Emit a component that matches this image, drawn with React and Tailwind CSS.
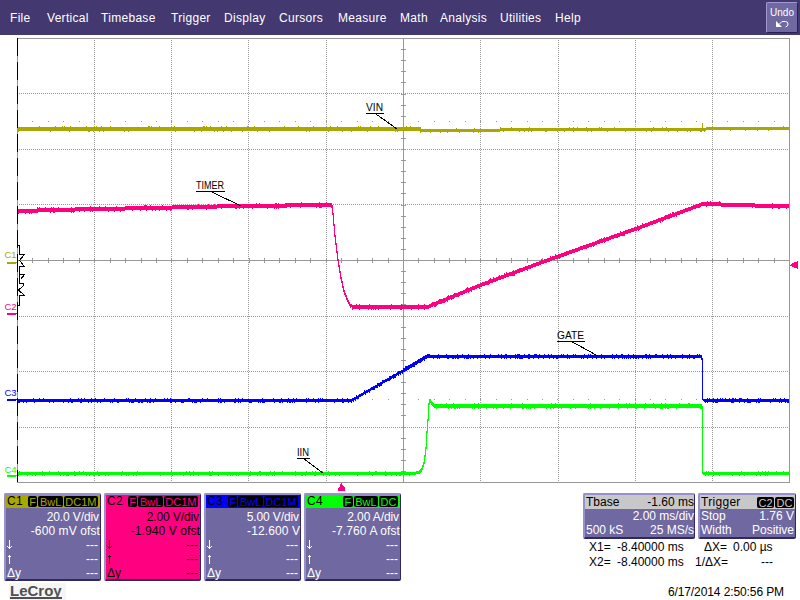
import clsx from "clsx";

const menuItems = [
  { label: "File", width: "w-[37px]" },
  { label: "Vertical", width: "w-[54px]" },
  { label: "Timebase", width: "w-[70px]" },
  { label: "Trigger", width: "w-[53px]" },
  { label: "Display", width: "w-[55px]" },
  { label: "Cursors", width: "w-[59px]" },
  { label: "Measure", width: "w-[62px]" },
  { label: "Math", width: "w-[40px]" },
  { label: "Analysis", width: "w-[60px]" },
  { label: "Utilities", width: "w-[55px]" },
  { label: "Help", width: "w-[40px]" },
];

const channels = [
  {
    name: "C1",
    flags: ["F", "BwL", "DC1M"],
    scale: "20.0 V/div",
    offset: "-600 mV ofst",
    header: "bg-[#aaa800]",
    flagText: "text-[#aaa800]",
    body: "bg-[#7068a0] text-white",
  },
  {
    name: "C2",
    flags: ["F", "BwL", "DC1M"],
    scale: "2.00 V/div",
    offset: "-1.940 V ofst",
    header: "bg-[#ff0080]",
    flagText: "text-[#ff0080]",
    body: "bg-[#ff0080] text-black",
  },
  {
    name: "C3",
    flags: ["F", "BwL", "DC1M"],
    scale: "5.00 V/div",
    offset: "-12.600 V",
    header: "bg-[#0000ff]",
    flagText: "text-[#0000ff]",
    body: "bg-[#7068a0] text-white",
  },
  {
    name: "C4",
    flags: ["F", "BwL", "DC"],
    scale: "2.00 A/div",
    offset: "-7.760 A ofst",
    header: "bg-[#00ff00]",
    flagText: "text-[#00ff00]",
    body: "bg-[#7068a0] text-white",
  },
];

// [x, y, thickness] break points of each waveform
const traces = [
  {
    id: "vin",
    color: "#aaa800",
    noise: 0.1,
    points: [[18, 129, 4], [420, 129, 4], [421, 130.5, 3], [480, 130.5, 3], [520, 129.5, 3], [700, 129.5, 3], [712, 128.5, 3], [789, 128.5, 3]],
  },
  {
    id: "timer",
    color: "#ff0080",
    noise: 0.14,
    points: [
      [18, 211, 4], [75, 209.5, 4], [150, 208, 4], [240, 206, 4], [331, 205, 4], [332, 206, 2], [333, 214, 2], [335, 236, 2],
      [338, 260, 2], [341, 278, 2], [344, 291, 2], [347, 299, 2], [350, 305, 3], [352, 306.5, 4], [429, 306.5, 4],
      [480, 285.5, 4], [550, 259.5, 4], [640, 227.5, 4], [698, 206, 4], [703, 204, 4], [789, 206.5, 4],
    ],
  },
  {
    id: "gate",
    color: "#0000ff",
    noise: 0.25,
    points: [[18, 400.5, 3], [352, 400.5, 3], [403, 371, 4], [428, 356, 4], [430, 356.5, 3], [701, 356.5, 3], [702, 358, 1], [703, 399, 1], [704, 400.5, 3], [789, 400.5, 3]],
  },
  {
    id: "iin",
    color: "#00ff00",
    noise: 0.15,
    points: [
      [18, 473.5, 3], [415, 473.5, 3], [419, 472, 3], [422, 469, 2], [424, 463, 2], [426, 448, 2], [427, 432, 2], [428, 420, 2],
      [429, 404, 2], [430, 400, 2], [431, 402, 3], [434, 405.5, 4], [701, 405.5, 4], [702, 407, 2], [703, 473, 2], [704, 473.5, 3], [789, 473.5, 3],
    ],
  },
];

function sample(points, x) {
  for (let i = 1; i < points.length; i++) {
    const [x0, y0, t0] = points[i - 1];
    const [x1, y1] = points[i];
    if (x <= x1) {
      return { y: y0 + ((y1 - y0) * (x - x0)) / (x1 - x0), t: x === x1 ? points[i][2] : t0 };
    }
  }
  const last = points[points.length - 1];
  return { y: last[1], t: last[2] };
}

// One vertical run of pixels per column, with an odd pixel of noise on either side
function tracePath(points, noise, start) {
  let seed = start;
  const rand = () => {
    seed = (seed * 16807) % 2147483647;
    return seed / 2147483647;
  };
  let d = "";
  for (let x = 18; x < 789; x++) {
    const a = sample(points, x);
    const b = sample(points, x + 1);
    let top = Math.round(Math.min(a.y, b.y) - a.t / 2);
    let bottom = Math.round(Math.max(a.y, b.y) + a.t / 2);
    if (a.t > 2 && Math.abs(a.y - b.y) < 1) {
      bottom = top + a.t;
      if (rand() < noise) bottom += 1;
      if (rand() < noise * 0.7) top -= 1;
    }
    d += `M${x} ${top}h1V${bottom}h-1z`;
  }
  return d;
}

const columns = [94, 171, 248, 326, 403, 480, 558, 635, 712];
const rows = [93, 149, 204, 260, 316, 371, 427];
const xTicks = Array.from({ length: 49 }, (_, i) => Math.round(17 + (i + 1) * 15.44));
const yTicks = Array.from({ length: 39 }, (_, i) => Math.round(38 + (i + 1) * 11.1));

const markers = [
  { name: "C1", text: 258, line: 262, color: "#aaa800" },
  { name: "C2", text: 310, line: 313, color: "#ff0080" },
  { name: "C3", text: 396, line: 399, color: "#0000ff" },
  { name: "C4", text: 473, line: 475, color: "#00ff00" },
];

const labels = [
  { name: "VIN", x: 366, y: 111, w: 18, to: [397, 129] },
  { name: "TIMER", x: 196, y: 189, w: 29, to: [241, 206] },
  { name: "GATE", x: 557, y: 339, w: 28, to: [598, 356] },
  { name: "IIN", x: 297, y: 456, w: 13, to: [323, 473] },
];

function Scope() {
  return (
    <svg className="block h-[457px] w-[800px] shrink-0" viewBox="0 35 800 457" shapeRendering="crispEdges">
      <g fill="none" stroke="#989898">
        {columns.map((x) => (
          <path key={x} d={`M${x + 0.5} 40V482`} strokeDasharray="1 1" />
        ))}
        {rows.map((y) => (
          <path key={y} d={`M19 ${y + 0.5}H789`} strokeDasharray="1 1" />
        ))}
        <path d="M17 38.5H789.5V482.5H17.5V38M403.5 38V482M17 260.5H789" />
        {xTicks.map((x) => (
          <path key={x} d={`M${x + 0.5} 258V263M${x} 121.5h1M${x} 399.5h1`} />
        ))}
        {yTicks.map((y) => (
          <path key={y} d={`M401 ${y + 0.5}H406`} />
        ))}
      </g>

      <path d="M17.5 38V482" stroke="#000" strokeDasharray="18 6" />
      <path
        d="M17.5 240V247M17 245.5H19.5V254.5H24.5L19.5 260.5L24.5 266.5H19.5V274.5H24.5L20.5 279.5M19.5 266V283.5H23.5V285.5L18.5 290L24.5 295.5H19.5V305.5H17M17.5 254V272M17.5 278V296M17.5 302V320"
        fill="none"
        stroke="#000"
      />

      {traces.map(({ id, color, noise, points }, i) => (
        <path key={id} d={tracePath(points, noise, 4711 + i * 977)} fill={color} />
      ))}
      <path d="M702.5 123V128" stroke="#aaa800" />

      {labels.map(({ name, x, y, w, to }) => (
        <g key={name}>
          <text x={x} y={y} fontSize="11" textLength={w - 1} lengthAdjust="spacingAndGlyphs">
            {name}
          </text>
          <path
            d={`M${x} ${y + 2.5}h${w}M${x + w * 0.55} ${y + 3}L${to[0]} ${to[1]}`}
            stroke="#000"
            fill="none"
          />
        </g>
      ))}

      {markers.map(({ name, text, line, color }) => (
        <g key={name} fill={color}>
          <text x="4.5" y={text} fontSize="9.5">
            {name}
          </text>
          <path d={`M7 ${line}h10v1h-1v1h-9z`} />
        </g>
      ))}

      <path d="M341 483h1l1 3l2 2v3h-7v-3l2-2z" fill="#ff0080" />
      <path d="M790 265l3-2l5-2v8l-5-2l-3-1z" fill="#ff0080" />
    </svg>
  );
}

function Panel({ className, children }) {
  return (
    <div
      className={clsx(
        "shrink-0 rounded-[2px] border-t-2 border-r border-b-2 border-l-2 border-t-[#9890cc] border-l-[#9890cc] border-r-[#302860] border-b-[#302860]",
        className
      )}
    >
      {children}
    </div>
  );
}

function Flags({ items, className }) {
  return (
    <span className="flex gap-px">
      {items.map((item) => (
        <span
          key={item}
          className={clsx("h-[11px] rounded-[2px] bg-black px-[1.5px] text-[11px] leading-[12px]", className)}
        >
          {item}
        </span>
      ))}
    </span>
  );
}

function Arrow({ down }) {
  return (
    <svg
      className={clsx("h-3 w-[7px]", down && "rotate-180")}
      viewBox="0 0 7 12"
      fill="none"
      stroke="currentColor"
      shapeRendering="crispEdges"
    >
      <path d="M3.5 2v9M3.5 2.5L1.5 4.5M3.5 2.5L5.5 4.5" />
    </svg>
  );
}

function ChannelPanel({ name, flags, scale, offset, header, flagText, body }) {
  return (
    <Panel className={clsx("h-[88px] w-[97px] text-[12px] leading-[14px]", body)}>
      <div className={clsx("flex h-[13px] items-center justify-between pr-[2px] pl-px text-black", header)}>
        <span className="text-[12px] leading-[13px] tracking-[0.4px]">{name}</span>
        <Flags items={flags} className={flagText} />
      </div>
      <div className="mt-[2px] pr-px text-right tracking-[-0.1px] whitespace-nowrap">{scale}</div>
      <div className="text-right tracking-[0.1px] whitespace-nowrap">{offset}</div>
      <div className="flex h-[14px] items-center justify-between pr-[2px]">
        <Arrow down />
        <span>---</span>
      </div>
      <div className="flex h-[14px] items-center justify-between pr-[2px]">
        <Arrow />
        <span>---</span>
      </div>
      <div className="flex h-[14px] justify-between pr-[2px] pl-px">
        <span>Δy</span>
        <span>---</span>
      </div>
    </Panel>
  );
}

function Row({ left, right, className }) {
  return (
    <div className={clsx("flex h-[14px] justify-between pl-px whitespace-nowrap", className)}>
      <span>{left}</span>
      <span>{right}</span>
    </div>
  );
}

export default function App() {
  return (
    <div className="flex h-[600px] w-[800px] flex-col overflow-hidden bg-white font-['Liberation_Sans',Arial,sans-serif] text-black">
      <header className="flex h-[35px] shrink-0 justify-between bg-[#443870] pr-[2px] pl-[10px] text-white">
        <nav className="flex items-center text-[12px] tracking-[0.3px]">
          {menuItems.map(({ label, width }) => (
            <span key={label} className={clsx("shrink-0", width)}>
              {label}
            </span>
          ))}
        </nav>
        <button className="mt-[2px] flex h-[31px] w-[32px] flex-col items-center rounded-[2px] border border-t-[#a098d0] border-r-[#282050] border-b-[#282050] border-l-[#a098d0] bg-[#7068a0] pt-[4px] text-[10px] leading-[12px]">
          Undo
          <svg className="mt-px h-[8px] w-[13px]" viewBox="0 0 13 8" fill="none" stroke="currentColor">
            <path d="M0 1v6h6z" fill="currentColor" stroke="none" />
            <path d="M3 4.5L6 1.5h3.5Q12 1.5 12 4T9.5 7" />
          </svg>
        </button>
      </header>

      <Scope />

      <footer className="flex h-[108px] shrink-0 justify-between pt-px pr-[4px] pl-[4px]">
        <div className="flex flex-col">
          <div className="flex gap-[3px]">
            {channels.map((channel) => (
              <ChannelPanel key={channel.name} {...channel} />
            ))}
          </div>
          <div className="mt-[2px] ml-[5px] h-[17px] w-[57px] bg-[#f5f5f5] pl-px text-[15px] leading-[16px] font-bold text-[#505050]">
            <span className="block h-[16px] w-[52px] border-b-2 border-[#505050]">LeCroy</span>
          </div>
        </div>

        <div className="flex w-[213px] flex-col text-[12px] leading-[14px]">
          <div className="flex justify-between">
            <Panel className="h-[46px] w-[112px] bg-[#7068a0] text-white">
              <Row left="Tbase" right="-1.60 ms" className="bg-[#c8c8c8] text-black" />
              <Row right="2.00 ms/div" />
              <Row left="500 kS" right="25 MS/s" />
            </Panel>
            <Panel className="h-[46px] w-[98px] bg-[#7068a0] text-white">
              <div className="flex h-[14px] items-center justify-between bg-[#c8c8c8] px-px text-black">
                <span className="tracking-[0.3px]">Trigger</span>
                <Flags items={["C2", "DC"]} className="text-[#c8c8c8]" />
              </div>
              <Row left="Stop" right="1.76 V" className="pr-px" />
              <Row left="Width" right="Positive" className="pr-px" />
            </Panel>
          </div>
          <div className="mt-px grid grid-cols-[28px_78px_32px_1fr] pl-[6px] leading-[15px] whitespace-nowrap">
            <span>X1=</span>
            <span>-8.40000 ms</span>
            <span className="text-right">ΔX=</span>
            <span className="pl-[6px]">0.00 µs</span>
            <span>X2=</span>
            <span>-8.40000 ms</span>
            <span className="text-right">1/ΔX=</span>
            <span className="pl-[34px]">---</span>
          </div>
          <div className="mt-[15px] pr-[12px] text-right tracking-[-0.1px]">6/17/2014 2:50:56 PM</div>
        </div>
      </footer>
    </div>
  );
}
